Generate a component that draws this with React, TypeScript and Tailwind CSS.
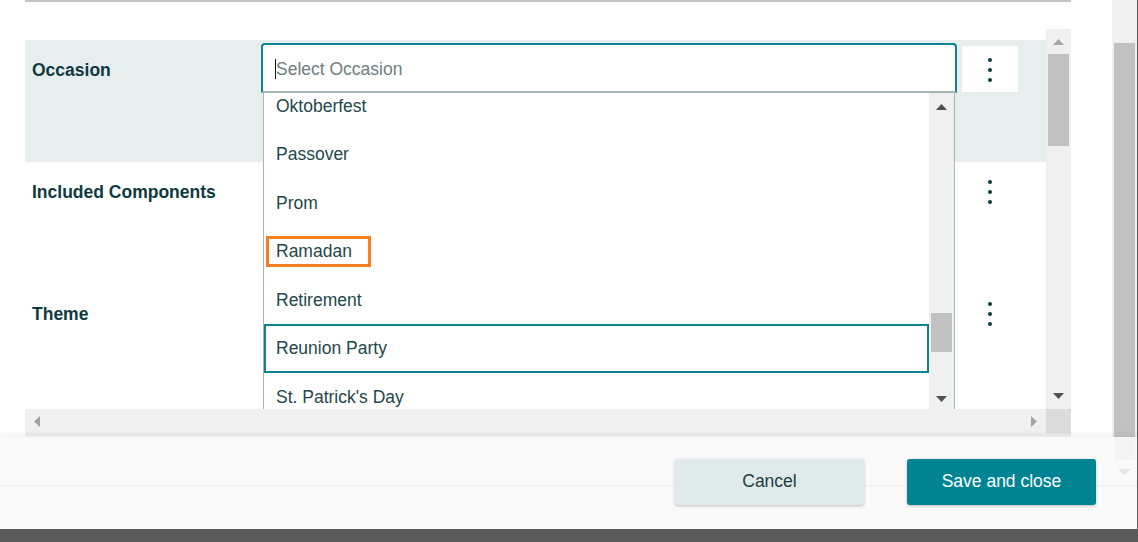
import React from "react";

const Tri = ({ dir, color, w, h }: { dir: "up" | "down" | "left" | "right"; color: string; w: number; h: number }) => {
  let pts = "";
  if (dir === "up") pts = `0,${h} ${w / 2},0 ${w},${h}`;
  if (dir === "down") pts = `0,0 ${w},0 ${w / 2},${h}`;
  if (dir === "left") pts = `${w},0 ${w},${h} 0,${h / 2}`;
  if (dir === "right") pts = `0,0 ${w},${h / 2} 0,${h}`;
  return (
    <svg width={w} height={h} viewBox={`0 0 ${w} ${h}`} className="block shrink-0">
      <polygon points={pts} fill={color} />
    </svg>
  );
};

const Dots = () => (
  <div className="flex flex-col items-center pt-[12px] gap-[6px]">
    <span className="block w-[4px] h-[4px] rounded-full bg-[#0d3a3f]" />
    <span className="block w-[4px] h-[4px] rounded-full bg-[#0d3a3f]" />
    <span className="block w-[4px] h-[4px] rounded-full bg-[#0d3a3f]" />
  </div>
);

const items = [
  "Oktoberfest",
  "Passover",
  "Prom",
  "Ramadan",
  "Retirement",
  "Reunion Party",
  "St. Patrick's Day",
];

function Dropdown() {
  return (
    <div className="absolute left-[2px] top-[53px] z-10 w-[692px] h-[316px] bg-white border-x border-[#a9b7b7] flex overflow-hidden">
      <div className="w-[665px] overflow-hidden">
        <div className="-mt-[11.5px]">
          {items.map((it) => {
            if (it === "Reunion Party") {
              return (
                <div key={it} className="h-[48.5px] flex items-center pl-[10px] border-2 border-[#0f8291] text-[17.5px] text-[#1f474c]">
                  {it}
                </div>
              );
            }
            return (
              <div key={it} className="relative h-[48.5px] flex items-center pl-[12px] text-[17.5px] text-[#1f474c]">
                {it}
                {it === "Ramadan" && (
                  <span className="absolute left-[2px] top-[9px] w-[105px] h-[31px] border-[3px] border-[#f47f22]" />
                )}
              </div>
            );
          })}
        </div>
      </div>
      <div className="w-[25px] bg-[#f0f0f0] flex flex-col items-center pt-[11px] pb-[7px]">
        <Tri dir="up" color="#505050" w={11} h={6} />
        <div className="mt-[203px] h-[39px] self-stretch mx-[2px] bg-[#c1c1c1]" />
        <div className="flex-1" />
        <Tri dir="down" color="#505050" w={11} h={6} />
      </div>
    </div>
  );
}

function Row({
  label,
  shaded,
  children,
}: {
  label: string;
  shaded?: boolean;
  children?: React.ReactNode;
}) {
  return (
    <div className={`flex h-[122px] ${shaded ? "bg-[#e8eded]" : "bg-white"}`}>
      <div className="w-[236px] pl-[7px] pt-[20px] text-[17.5px] leading-[20px] font-bold text-[#0d3a3f]">{label}</div>
      <div className="w-[696px] pt-[3px] relative">{children}</div>
      <div className="w-[5px]" />
      <div className="w-[56px] pt-[6px]">
        <div className={`h-[46px] ${shaded ? "bg-white" : ""}`}>
          <Dots />
        </div>
      </div>
    </div>
  );
}

export default function App() {
  return (
    <div className="w-[1138px] h-[542px] flex flex-col overflow-hidden bg-white font-['Liberation_Sans',Arial,sans-serif]">
      <div className="flex h-[437px]">
        <div className="w-[1112px] pl-[25px] flex flex-col">
          <div className="w-[1046px] h-[2px] bg-[#c4c4c4]" />
          <div className="h-[27px]" />
          <div className="w-[1046px] flex flex-col">
            <div className="flex h-[380px]">
              <div className="w-[1021px] relative overflow-hidden pt-[11px]">
                <Row label="Occasion" shaded>
                  <div className="h-[50px] bg-white border-2 border-[#0b8493] border-b-[#a6b5b5] rounded-t-[4px] flex items-center pl-[12px] pt-[2px]">
                    <span className="block w-[1px] h-[20px] bg-[#111]" />
                    <span className="text-[17.5px] text-[#6e7e7f]">Select Occasion</span>
                  </div>
                  <Dropdown />
                </Row>
                <Row label="Included Components" />
                <Row label="Theme" />
              </div>
              <div className="w-[25px] bg-[#f0f0f0] flex flex-col items-center pt-[10px] pb-[10px]">
                <Tri dir="up" color="#a6a6a6" w={11} h={6} />
                <div className="mt-[9px] h-[92px] self-stretch mx-[2px] bg-[#c1c1c1]" />
                <div className="flex-1" />
                <Tri dir="down" color="#505050" w={11} h={6} />
              </div>
            </div>
            <div className="flex h-[24px]">
              <div className="w-[1021px] bg-[#f0f0f0] flex items-center justify-between pl-[9px] pr-[9px]">
                <Tri dir="left" color="#a3a3a3" w={6} h={11} />
                <Tri dir="right" color="#a3a3a3" w={6} h={11} />
              </div>
              <div className="w-[25px] bg-[#dcdcdc]" />
            </div>
            <div className="h-[4px] bg-gradient-to-b from-[#e8e8e8] to-[#f4f4f4]" />
          </div>
        </div>
        <div className="w-[26px] bg-[#f0f0f0] pl-[2px] pr-[2px] border-r-[1.5px] border-[#5a5a5a] flex flex-col pt-[43px]">
          <div className="flex-1 bg-[#c1c1c1]" />
        </div>
      </div>
      <div className="relative h-[92px] flex bg-[linear-gradient(to_bottom,#fafafa_48px,#f0f0f0_48px,#f0f0f0_49px,#fafafa_49px)] shadow-[0_-3px_6px_rgba(0,0,0,0.05)]">
        <div className="w-[1112px] flex justify-end items-start pt-[22px] pr-[16px] gap-[43px]">
          <button className="w-[189px] h-[46px] pb-[2px] rounded-[3px] bg-[#e1eaea] text-[17.5px] text-[#1d3e42] shadow-[0_1px_3px_rgba(0,0,0,0.25)]">
            Cancel
          </button>
          <button className="w-[189px] h-[46px] pb-[2px] rounded-[3px] bg-[#008393] text-[17.5px] text-white shadow-[0_1px_3px_rgba(0,0,0,0.25)]">
            Save and close
          </button>
        </div>
        <div className="w-[26px] pl-[2px] pr-[2px] border-r-[1.5px] border-[#5a5a5a] flex flex-col items-center">
          <div className="h-[23px] self-stretch bg-[#f4f4f4]" />
          <div className="mt-[9px]">
            <Tri dir="down" color="#e6e6e6" w={13} h={6} />
          </div>
        </div>
      </div>
      <div className="h-[13px] bg-[#5a5a5a]" />
    </div>
  );
}
